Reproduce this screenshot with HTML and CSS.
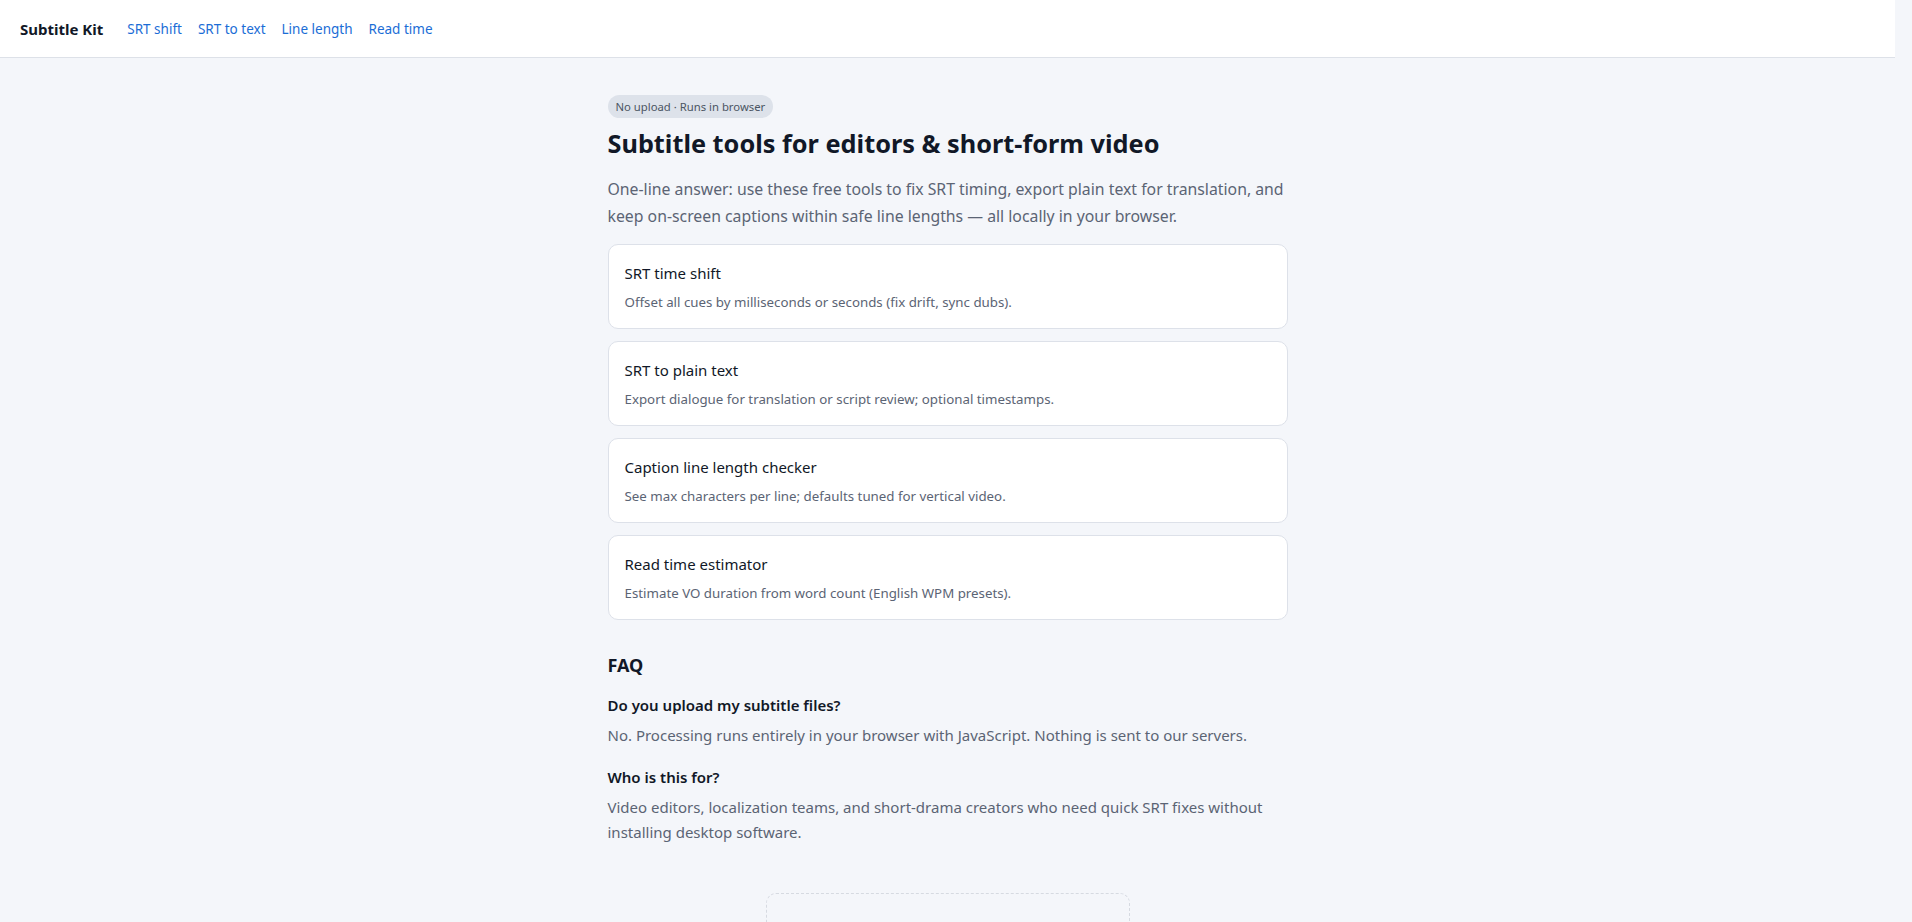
FILE: index.html
```html
<!DOCTYPE html>
<html lang="en">
<head>
  <meta charset="UTF-8" />
  <meta name="viewport" content="width=device-width, initial-scale=1.0"/>
  <title>Subtitle Kit</title>
  <link rel="stylesheet" href="styles.css">
</head>
<body>
  <header class="topbar">
    <a href="#" class="brand">Subtitle Kit</a>
    <nav class="nav">
      <a href="#">SRT shift</a>
      <a href="#">SRT to text</a>
      <a href="#">Line length</a>
      <a href="#">Read time</a>
    </nav>
  </header>

  <main class="wrap">
    <span class="badge">No upload · Runs in browser</span>
    <h1>Subtitle tools for editors &amp; short-form video</h1>
    <p class="lead">One-line answer: use these free tools to fix SRT timing, export plain text for translation, and keep on-screen captions within safe line lengths — all locally in your browser.</p>

    <div class="tools">
      <a href="#" class="card">
        <span class="card-title">SRT time shift</span>
        <span class="card-desc">Offset all cues by milliseconds or seconds (fix drift, sync dubs).</span>
      </a>
      <a href="#" class="card">
        <span class="card-title">SRT to plain text</span>
        <span class="card-desc">Export dialogue for translation or script review; optional timestamps.</span>
      </a>
      <a href="#" class="card">
        <span class="card-title">Caption line length checker</span>
        <span class="card-desc">See max characters per line; defaults tuned for vertical video.</span>
      </a>
      <a href="#" class="card">
        <span class="card-title">Read time estimator</span>
        <span class="card-desc">Estimate VO duration from word count (English WPM presets).</span>
      </a>
    </div>

    <section class="faq">
      <h2>FAQ</h2>
      <div class="faq-item">
        <h3>Do you upload my subtitle files?</h3>
        <p>No. Processing runs entirely in your browser with JavaScript. Nothing is sent to our servers.</p>
      </div>
      <div class="faq-item">
        <h3>Who is this for?</h3>
        <p>Video editors, localization teams, and short-drama creators who need quick SRT fixes without installing desktop software.</p>
      </div>
    </section>

    <div class="ad-slot">
      <div class="ad-inner"></div>
    </div>
  </main>

  <footer class="footer">
    <p>Subtitle Kit · Free browser tools for subtitle editing</p>
  </footer>
</body>
</html>
```

FILE: styles.css
```css
body {
  margin: 0;
  padding-right: 17px;
  background-color: #f4f6fa;
  color: #111827;
  font-family: "Noto Sans", "Open Sans", sans-serif;
}
a {
  text-decoration: none;
}
.topbar {
  display: flex;
  align-items: center;
  height: 57px;
  padding: 0 20px;
  background-color: #ffffff;
  border-bottom: 1px solid #dde1e8;
}
.brand {
  font-size: 15px;
  font-weight: 700;
  color: #111827;
  margin-right: 24px;
}
.nav {
  display: flex;
  gap: 16px;
}
.nav a {
  font-size: 13.5px;
  color: #1b6dd6;
}
.wrap {
  max-width: 680px;
  margin: 0 auto;
  padding: 36px 0 64px;
}
.badge {
  display: inline-block;
  font-size: 11.3px;
  line-height: 17px;
  padding: 3px 8px;
  border-radius: 999px;
  background-color: #dde2ea;
  color: #4b5563;
}
h1 {
  font-size: 25.3px;
  line-height: 1.3;
  margin: 9px 0 16px;
}
.lead {
  font-size: 15.8px;
  line-height: 26.7px;
  color: #5b6474;
  margin: 0 0 15px;
}
.tools {
  display: grid;
  gap: 12px;
}
.card {
  display: flex;
  flex-direction: column;
  gap: 7px;
  padding: 16px;
  background-color: #ffffff;
  border: 1px solid #dde1e9;
  border-radius: 10px;
}
.card-title {
  font-size: 15px;
  line-height: 24px;
  color: #111827;
}
.card-desc {
  font-size: 13.3px;
  line-height: 20px;
  color: #5b6474;
}
.faq h2 {
  font-size: 18px;
  line-height: 1.3;
  margin: 34px 0 13px;
}
.faq-item {
  margin-top: 18px;
}
.faq-item:first-of-type {
  margin-top: 16px;
}
.faq-item h3 {
  font-size: 15px;
  font-weight: 600;
  line-height: 22px;
  margin: 0 0 7px;
}
.faq-item p {
  font-size: 15px;
  line-height: 25px;
  color: #5b6474;
  margin: 0;
}
.ad-slot {
  width: 300px;
  margin: 48px auto 0;
  padding: 31px;
  border: 1px dashed #d6dae1;
  border-radius: 10px;
}
.ad-inner {
  height: 600px;
}
.footer {
  border-top: 1px solid #dde1e8;
  background-color: #ffffff;
  padding: 24px 20px 120px;
  text-align: center;
  font-size: 13px;
  color: #6b7280;
}
.footer p {
  margin: 0;
}
```
